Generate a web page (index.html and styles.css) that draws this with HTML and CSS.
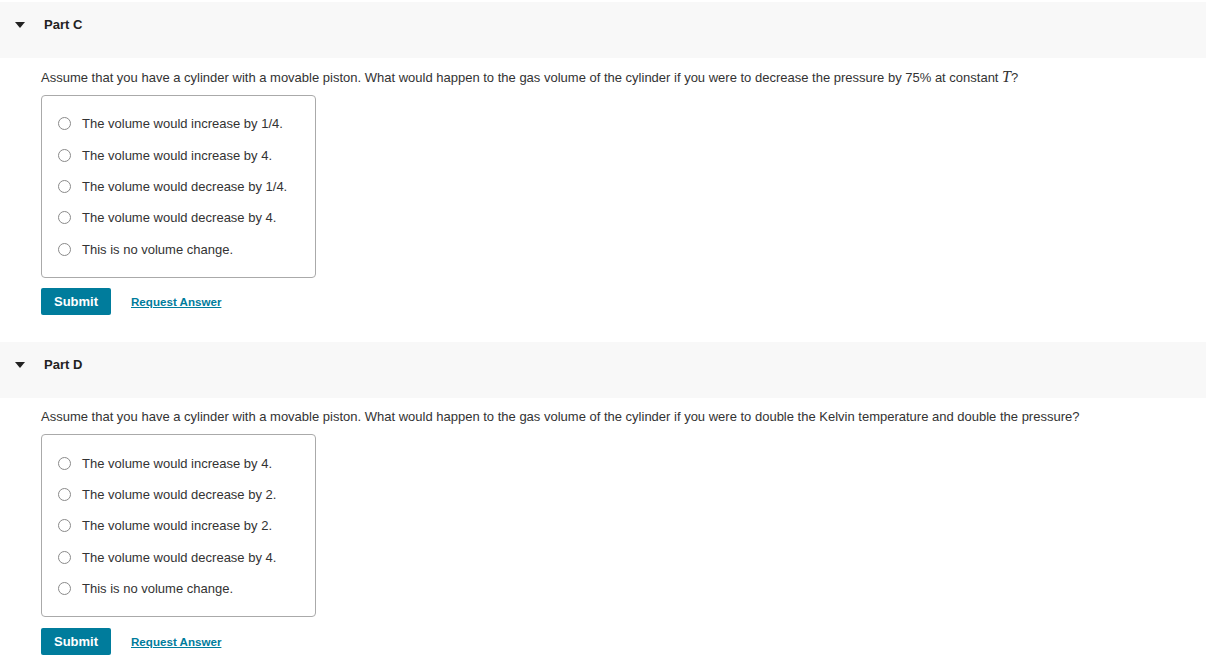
FILE: index.html
```html
<!DOCTYPE html>
<html>
<head>
<meta charset="utf-8">
<link rel="stylesheet" href="styles.css">
</head>
<body>
<section class="part">
  <div class="part-head">
    <span class="caret"></span>
    <span class="part-title">Part C</span>
  </div>
  <div class="part-body">
    <p class="question">Assume that you have a cylinder with a movable piston. What would happen to the gas volume of the cylinder if you were to decrease the pressure by 75% at constant <span class="math">T</span>?</p>
    <div class="choices">
      <label class="choice"><span class="radio"></span>The volume would increase by 1/4.</label>
      <label class="choice"><span class="radio"></span>The volume would increase by 4.</label>
      <label class="choice"><span class="radio"></span>The volume would decrease by 1/4.</label>
      <label class="choice"><span class="radio"></span>The volume would decrease by 4.</label>
      <label class="choice"><span class="radio"></span>This is no volume change.</label>
    </div>
    <div class="actions">
      <button class="submit">Submit</button>
      <a class="request" href="#">Request Answer</a>
    </div>
  </div>
</section>
<section class="part">
  <div class="part-head">
    <span class="caret"></span>
    <span class="part-title">Part D</span>
  </div>
  <div class="part-body">
    <p class="question">Assume that you have a cylinder with a movable piston. What would happen to the gas volume of the cylinder if you were to double the Kelvin temperature and double the pressure?</p>
    <div class="choices">
      <label class="choice"><span class="radio"></span>The volume would increase by 4.</label>
      <label class="choice"><span class="radio"></span>The volume would decrease by 2.</label>
      <label class="choice"><span class="radio"></span>The volume would increase by 2.</label>
      <label class="choice"><span class="radio"></span>The volume would decrease by 4.</label>
      <label class="choice"><span class="radio"></span>This is no volume change.</label>
    </div>
    <div class="actions">
      <button class="submit">Submit</button>
      <a class="request" href="#">Request Answer</a>
    </div>
  </div>
</section>
</body>
</html>
```
FILE: styles.css
```css
html, body {
  margin: 0;
  padding: 0;
  background: #fff;
  font-family: "Liberation Sans", Arial, sans-serif;
  color: #333;
}
body {
  padding-top: 2px;
}
.part {
  margin-bottom: 27px;
}
.part-head {
  height: 56px;
  box-sizing: border-box;
  padding-top: 13px;
  background: #f8f8f8;
  display: flex;
  align-items: flex-start;
}
.caret {
  width: 0;
  height: 0;
  margin-left: 15px;
  margin-right: 19px;
  margin-top: 7px;
  border-left: 5px solid transparent;
  border-right: 5px solid transparent;
  border-top: 6px solid #222;
}
.part-title {
  font-weight: bold;
  font-size: 13px;
  line-height: 20px;
  color: #222;
}
.part-body {
  padding-left: 41px;
}
.question {
  margin: 10px 0 8px;
  font-size: 13px;
  line-height: 18px;
  color: #333;
}
.math {
  font-family: "Liberation Serif", "Times New Roman", serif;
  font-style: italic;
  font-size: 16px;
}
.choices {
  width: 273px;
  border: 1px solid #aaa;
  border-radius: 4px;
  padding: 12px 0;
  display: flex;
  flex-direction: column;
}
.choice {
  display: flex;
  align-items: center;
  height: 31.4px;
  font-size: 13px;
  color: #333;
  padding-left: 16px;
}
.radio {
  width: 11px;
  height: 11px;
  border: 1px solid #8a8a8a;
  border-radius: 50%;
  margin-right: 11px;
  flex: none;
}
.actions {
  margin-top: 10.5px;
  display: flex;
  align-items: center;
}
.submit {
  width: 70px;
  height: 27px;
  border: none;
  border-radius: 2px;
  background: #007c9c;
  color: #fff;
  font-family: "Liberation Sans", Arial, sans-serif;
  font-size: 13px;
  font-weight: bold;
  padding: 0;
}
.request {
  margin-left: 20px;
  font-size: 11.6px;
  font-weight: bold;
  color: #007c9c;
  text-decoration: underline;
}
```
